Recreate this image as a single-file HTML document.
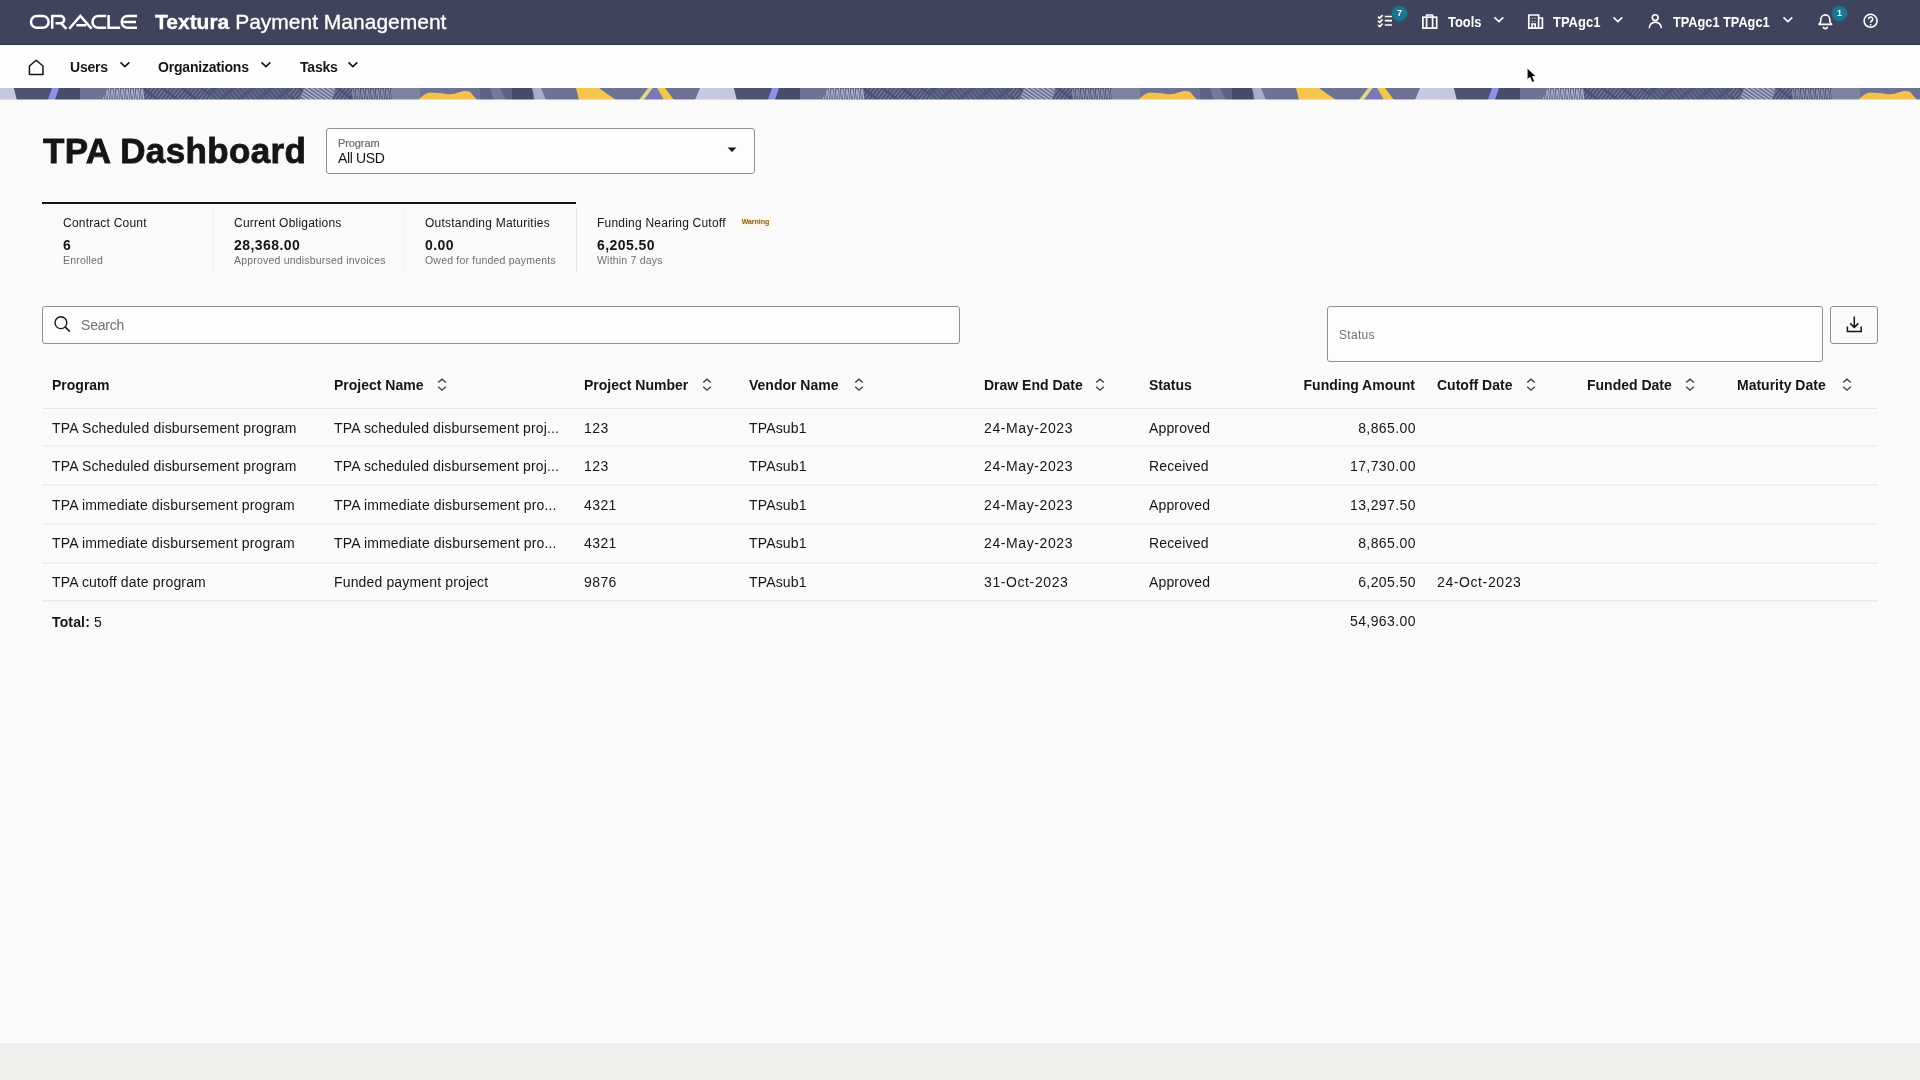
<!DOCTYPE html>
<html><head><meta charset="utf-8">
<style>
*{margin:0;padding:0;box-sizing:border-box}
html,body{width:1920px;height:1080px;overflow:hidden;background:#fafafa;-webkit-font-smoothing:antialiased;font-family:"Liberation Sans",sans-serif;color:#161513}
.a{position:absolute;white-space:nowrap}
svg.a{overflow:visible}
#hdr{position:absolute;left:0;top:0;width:1920px;height:45px;background:#3f435c;border-bottom:1px solid #2f3245}
#hdr .t{color:#fff}
#nav{position:absolute;left:0;top:45px;width:1920px;height:43px;background:#fefefe}
#banner{position:absolute;left:0;top:88px;width:1920px;height:12px;overflow:hidden}
#foot{position:absolute;left:0;top:1044px;width:1920px;height:36px;background:linear-gradient(#f0f0f0 0,#f0f0f0 8px,#f1f1ec 11px);border-top:1px solid #e8e8e8;box-shadow:0 -1px 1px #f3f3f3}
.nt{font-size:14px;font-weight:bold;color:#161513;line-height:16px;letter-spacing:-0.2px}
.ht{font-size:15px;font-weight:bold;color:#fff;line-height:16px;transform-origin:0 0}
.th{font-size:14px;font-weight:bold;color:#161513}
.td{font-size:14px;color:#161513;letter-spacing:0.15px}
.dg{letter-spacing:0.42px}
.dt{letter-spacing:0.6px}
.rb{position:absolute;left:42px;width:1836px;height:1px;background:#e9e9e8}
.kl{font-size:12px;color:#161513;line-height:14px;letter-spacing:0.22px}
.kv{font-size:14px;font-weight:bold;color:#161513;line-height:15px;letter-spacing:0.45px}
.ks{font-size:10.5px;color:#6f6f6f;line-height:12px;letter-spacing:0.2px}
.badge{position:absolute;width:15px;height:15px;border-radius:50%;background:#1d7592;box-shadow:0 0 1.5px #1d7592;color:#fff;font-size:9px;font-weight:bold;text-align:center;line-height:15px}
.sep{position:absolute;width:1px;background:#ececec}
</style></head><body><div id="root" style="position:absolute;left:0;top:0;width:1920px;height:1080px;will-change:transform">
<div id="hdr">
  <svg class="a" style="left:30px;top:15px" width="108" height="14" viewBox="0 0 108 14">
    <g fill="none" stroke="#fff" stroke-width="2.5">
      <rect x="1" y="1" width="17.6" height="11.8" rx="5.9"/>
      <path d="M22.2 13.8 V1 H30.6 A3.6 3.6 0 0 1 30.6 8.2 H25.5 L31 8.2 L36.4 13.8"/>
      <path d="M39.2 13.8 L50.4 0.9 L61.6 13.8 M46.4 10.3 H56.3"/>
      <path d="M76.2 1 H68.4 A5.9 5.9 0 0 0 68.4 12.8 H76.2"/>
      <path d="M78.6 0 V12.8 H90.2"/>
      <path d="M107 1 H97.6 A5.9 5.9 0 0 0 97.6 12.8 H107 M93.2 6.9 H106"/>
    </g>
  </svg>
  <div class="a t" style="left:155px;top:10px;font-size:21px;line-height:24px;-webkit-text-stroke:0.35px #fff"><b>Textura</b> Payment Management</div>

  <!-- checklist icon -->
  <svg class="a" style="left:1377px;top:14px" width="16" height="14" viewBox="0 0 16 14">
    <g fill="none" stroke="#fff" stroke-width="1.7">
      <path d="M1 2.6 L2.7 4.2 L5.6 1.2 M1 6.8 L2.7 8.4 L5.6 5.4 M1 11 L2.7 12.6 L5.6 9.6"/>
      <path d="M7.8 2.5 H15 M7.8 6.7 H15 M7.8 11 H15"/>
    </g>
  </svg>
  <div class="badge" style="left:1392px;top:6px">7</div>
  <!-- briefcase -->
  <svg class="a" style="left:1422px;top:13px" width="16" height="16" viewBox="0 0 16 16">
    <g fill="none" stroke="#fff" stroke-width="1.7">
      <rect x="0.9" y="4.2" width="13.8" height="10.9"/>
      <path d="M4.6 15 V2 H10.6 V15"/>
    </g>
  </svg>
  <div class="a ht" style="left:1448px;top:14.3px;transform:scaleX(0.86)">Tools</div>
  <svg class="a" style="left:1493px;top:16px" width="12" height="8" viewBox="0 0 12 8"><path d="M1.5 1.4 L5.9 5.6 L10.3 1.4" fill="none" stroke="#fff" stroke-width="1.6"/></svg>
  <!-- building -->
  <svg class="a" style="left:1528px;top:14px" width="16" height="16" viewBox="0 0 16 16">
    <g fill="none" stroke="#fff" stroke-width="1.7">
      <path d="M0.8 14.2 V1 H10.6 V14.2 Z M10.6 4 H14.4 V14.2 H10.6"/>
      <path d="M3.8 4.4 H4.6 M6.6 4.4 H7.4 M3.8 7.4 H4.6 M6.6 7.4 H7.4" stroke-width="1.4"/>
      <path d="M4 14.2 V10 H7.2 V14.2"/>
    </g>
  </svg>
  <div class="a ht" style="left:1553px;top:14.3px;transform:scaleX(0.865)">TPAgc1</div>
  <svg class="a" style="left:1612px;top:16px" width="12" height="8" viewBox="0 0 12 8"><path d="M1.5 1.4 L5.9 5.6 L10.3 1.4" fill="none" stroke="#fff" stroke-width="1.6"/></svg>
  <!-- person -->
  <svg class="a" style="left:1648px;top:13px" width="16" height="16" viewBox="0 0 16 16">
    <g fill="none" stroke="#fff" stroke-width="1.6">
      <circle cx="7.2" cy="4.6" r="2.9"/>
      <path d="M1.2 15.2 A6.1 6.1 0 0 1 13.4 15.2"/>
    </g>
  </svg>
  <div class="a ht" style="left:1673px;top:14.3px;transform:scaleX(0.85)">TPAgc1 TPAgc1</div>
  <svg class="a" style="left:1782px;top:16px" width="12" height="8" viewBox="0 0 12 8"><path d="M1.5 1.4 L5.9 5.6 L10.3 1.4" fill="none" stroke="#fff" stroke-width="1.6"/></svg>
  <!-- bell -->
  <svg class="a" style="left:1818px;top:13px" width="16" height="16" viewBox="0 0 16 16">
    <g fill="none" stroke="#fff" stroke-width="1.6" stroke-linejoin="round">
      <path d="M1 11.4 H13.6 C12.4 10.2 11.8 9 11.8 7.4 V6.4 A4.5 4.5 0 0 0 2.8 6.4 V7.4 C2.8 9 2.2 10.2 1 11.4 Z"/>
      <path d="M5.4 13.8 A1.9 1.9 0 0 0 9.2 13.8"/>
    </g>
  </svg>
  <div class="badge" style="left:1832px;top:6px">1</div>
  <!-- help -->
  <svg class="a" style="left:1862px;top:13px" width="18" height="16" viewBox="0 0 18 16">
    <g fill="none" stroke="#fff" stroke-width="1.6">
      <circle cx="8.6" cy="7.8" r="6.5"/>
      <path d="M6.5 6.2 A2.1 2.1 0 1 1 9.4 8.1 C8.7 8.5 8.6 9 8.6 9.8"/>
    </g>
    <circle cx="8.6" cy="11.8" r="0.9" fill="#fff"/>
  </svg>
</div>

<div id="nav">
  <svg class="a" style="left:28px;top:14px" width="17" height="17" viewBox="0 0 17 17">
    <path d="M1.4 15.6 V7 L8.2 1.2 L15 7 V15.6 Z" fill="none" stroke="#161513" stroke-width="1.5" stroke-linejoin="round"/>
  </svg>
  <div class="a nt" style="left:70px;top:14px">Users</div>
  <svg class="a" style="left:119px;top:16px" width="12" height="8" viewBox="0 0 12 8"><path d="M1.5 1.4 L5.9 5.6 L10.3 1.4" fill="none" stroke="#161513" stroke-width="1.6"/></svg>
  <div class="a nt" style="left:158px;top:14px">Organizations</div>
  <svg class="a" style="left:260px;top:16px" width="12" height="8" viewBox="0 0 12 8"><path d="M1.5 1.4 L5.9 5.6 L10.3 1.4" fill="none" stroke="#161513" stroke-width="1.6"/></svg>
  <div class="a nt" style="left:300px;top:14px">Tasks</div>
  <svg class="a" style="left:347px;top:16px" width="12" height="8" viewBox="0 0 12 8"><path d="M1.5 1.4 L5.9 5.6 L10.3 1.4" fill="none" stroke="#161513" stroke-width="1.6"/></svg>
</div>
<div id="banner"><svg width="1920" height="12" viewBox="0 0 1920 12" style="position:absolute;left:0;top:0"><defs><pattern id="tx" width="3.2" height="12" patternUnits="userSpaceOnUse" patternTransform="rotate(38)"><rect width="3.2" height="12" fill="#474e6f"/><path d="M1.6 0 V7 M1.6 9 V12" stroke="#8a91b0" stroke-width="0.9"/></pattern><pattern id="txb" width="3.6" height="12" patternUnits="userSpaceOnUse" patternTransform="rotate(-40)"><rect width="3.6" height="12" fill="#4d5475"/><path d="M1.8 0 V5 M1.8 8 V12" stroke="#7c84a4" stroke-width="0.9"/></pattern><pattern id="zig" width="5" height="12" patternUnits="userSpaceOnUse"><rect width="5" height="12" fill="#5f6688"/><path d="M0.5 12 L2 1 L3.5 11 L4.6 0" fill="none" stroke="#b9bed6" stroke-width="0.9"/></pattern><pattern id="zig2" width="5" height="12" patternUnits="userSpaceOnUse"><rect width="5" height="12" fill="#4f5677"/><path d="M0.5 12 L2 1 L3.5 11 L4.6 0" fill="none" stroke="#959cba" stroke-width="0.9"/></pattern><pattern id="str" width="3" height="12" patternUnits="userSpaceOnUse" patternTransform="rotate(-55)"><rect width="3" height="12" fill="#6a7192"/><path d="M1.5 0 V12" stroke="#c3c8dc" stroke-width="1"/></pattern><g id="per"><rect x="0" y="0" width="720" height="12" fill="#6e7395"/><polygon points="0,0 14,0 17,12 0,12" fill="#c4c7dd"/><polygon points="14,0 52,0 48,12 17,12" fill="#4d5373"/><polygon points="52,0 59,0 55,12 48,12" fill="#8e93ee"/><polygon points="59,0 80,0 80,12 55,12" fill="#484d6b"/><polygon points="108,0 392,0 392,12 102,12" fill="url(#tx)"/><polygon points="210,0 290,0 290,12 210,12" fill="url(#txb)"/><polygon points="108,0 144,0 144,12 102,12" fill="url(#zig)"/><polygon points="304,0 336,0 332,12 300,12" fill="url(#str)"/><polygon points="352,0 392,0 392,12 352,12" fill="url(#zig2)"/><rect x="392" y="0" width="28" height="12" fill="#7d83a1"/><path d="M418 12 C423 8 425 5 431 4.6 L442 5.2 C448 6.4 452 6.8 458 4.6 C462 2.8 466 2.4 470 3.8 L477 12 Z" fill="#f2c44e"/><rect x="480" y="0" width="32" height="12" fill="#5d6385"/><polygon points="490,0 500,0 506,12 494,12" fill="#7a809e" opacity="0.8"/><rect x="512" y="0" width="21" height="12" fill="#464b6a"/><polygon points="532,0 541,0 546,12 535,12" fill="#a8adc9"/><polygon points="576,0 599,0 616,12 579,12" fill="#f2c650"/><polygon points="648,0 653,0 644,12 639,12" fill="#d9d98e"/><polygon points="653,0 657,0 664,12 644,12" fill="#7b78b8"/><polygon points="657,0 665,0 674,12 664,12" fill="#f2c650"/><polygon points="700,0 720,0 720,12 695,12" fill="#c6c9e0"/></g></defs><use href="#per" x="0"/><use href="#per" x="720"/><use href="#per" x="1440"/><rect x="0" y="11.5" width="1920" height="0.5" fill="#fafafa"/></svg></div>

<div class="a" style="left:43px;top:131px;font-size:35px;font-weight:bold;line-height:40px;letter-spacing:0.35px;-webkit-text-stroke:0.8px #161513">TPA Dashboard</div>
<div class="a" style="left:326px;top:128px;width:429px;height:46px;border:1px solid #8f8f8f;border-radius:3px;background:#fdfdfd"></div>
<div class="a" style="left:338px;top:137px;font-size:11px;color:#6a6a6a;line-height:13px;-webkit-text-stroke:0.2px #6a6a6a;letter-spacing:-0.1px">Program</div>
<div class="a" style="left:338px;top:150px;font-size:14px;line-height:16px;letter-spacing:-0.35px">All USD</div>
<svg class="a" style="left:727px;top:147px" width="10" height="6" viewBox="0 0 10 6"><path d="M0.6 0.4 H9.4 L5 5 Z" fill="#161513"/></svg>

<div class="a" style="left:42px;top:202px;width:534px;height:2px;background:#161513"></div>
<div class="sep" style="left:213px;top:208px;height:64px;background:#f0f0f0"></div>
<div class="sep" style="left:404px;top:208px;height:64px;background:#f0f0f0"></div>
<div class="sep" style="left:576px;top:208px;height:64px;background:#e4e4e4"></div>

<div class="a kl" style="left:63px;top:216px">Contract Count</div>
<div class="a kv" style="left:63px;top:238px">6</div>
<div class="a ks" style="left:63px;top:254px">Enrolled</div>

<div class="a kl" style="left:234px;top:216px">Current Obligations</div>
<div class="a kv" style="left:234px;top:238px">28,368.00</div>
<div class="a ks" style="left:234px;top:254px">Approved undisbursed invoices</div>

<div class="a kl" style="left:425px;top:216px">Outstanding Maturities</div>
<div class="a kv" style="left:425px;top:238px">0.00</div>
<div class="a ks" style="left:425px;top:254px">Owed for funded payments</div>

<div class="a kl" style="left:597px;top:216px">Funding Nearing Cutoff</div>
<div class="a kv" style="left:597px;top:238px">6,205.50</div>
<div class="a ks" style="left:597px;top:254px">Within 7 days</div>
<div class="a" style="left:740px;top:216px;width:31px;height:12px;background:#fdf6ea;border-radius:2px;font-size:7px;font-weight:bold;color:#8a5a12;line-height:12px;text-align:center">Warning</div>

<!-- search -->
<div class="a" style="left:42px;top:306px;width:918px;height:38px;border:1px solid #8f8f8f;border-radius:3px;background:#fdfdfd"></div>
<svg class="a" style="left:52px;top:314px" width="20" height="20" viewBox="0 0 20 20">
  <circle cx="8.9" cy="8.7" r="5.9" fill="none" stroke="#161513" stroke-width="1.4"/>
  <path d="M13.1 12.9 L17.8 17.6" stroke="#161513" stroke-width="1.5"/>
</svg>
<div class="a" style="left:81px;top:316.5px;font-size:14px;color:#6f6f6f;line-height:16px;letter-spacing:-0.2px">Search</div>

<!-- status -->
<div class="a" style="left:1327px;top:306px;width:496px;height:56px;border:1px solid #8f8f8f;border-radius:3px;background:#fdfdfd"></div>
<div class="a" style="left:1339px;top:328px;font-size:12px;color:#6f6f6f;line-height:14px;letter-spacing:0.3px">Status</div>
<!-- download -->
<div class="a" style="left:1830px;top:306px;width:48px;height:38px;border:1px solid #8f8f8f;border-radius:3px;background:#fafafa"></div>
<svg class="a" style="left:1845px;top:315px" width="18" height="19" viewBox="0 0 18 19">
  <path d="M9.3 1.6 V12.2 M5.2 8.4 L9.3 12.4 L13.4 8.4" fill="none" stroke="#161513" stroke-width="1.5"/>
  <path d="M2.4 11.6 V16.6 H16.2 V11.6" fill="none" stroke="#161513" stroke-width="1.5"/>
</svg>
<div class="a th" style="left:52px;top:377px;line-height:16px">Program</div>
<div class="a th" style="left:334px;top:377px;line-height:16px">Project Name</div>
<svg class="a" style="left:437px;top:378px" width="10" height="14" viewBox="0 0 10 14"><path d="M1.2 4.6 L5 1.2 L8.8 4.6 M1.2 8.8 L5 12.2 L8.8 8.8" fill="none" stroke="#3a3a3a" stroke-width="1.3"/></svg>
<div class="a th" style="left:584px;top:377px;line-height:16px">Project Number</div>
<svg class="a" style="left:702px;top:378px" width="10" height="14" viewBox="0 0 10 14"><path d="M1.2 4.6 L5 1.2 L8.8 4.6 M1.2 8.8 L5 12.2 L8.8 8.8" fill="none" stroke="#3a3a3a" stroke-width="1.3"/></svg>
<div class="a th" style="left:749px;top:377px;line-height:16px">Vendor Name</div>
<svg class="a" style="left:854px;top:378px" width="10" height="14" viewBox="0 0 10 14"><path d="M1.2 4.6 L5 1.2 L8.8 4.6 M1.2 8.8 L5 12.2 L8.8 8.8" fill="none" stroke="#3a3a3a" stroke-width="1.3"/></svg>
<div class="a th" style="left:984px;top:377px;line-height:16px">Draw End Date</div>
<svg class="a" style="left:1095px;top:378px" width="10" height="14" viewBox="0 0 10 14"><path d="M1.2 4.6 L5 1.2 L8.8 4.6 M1.2 8.8 L5 12.2 L8.8 8.8" fill="none" stroke="#3a3a3a" stroke-width="1.3"/></svg>
<div class="a th" style="left:1149px;top:377px;line-height:16px">Status</div>
<div class="a th" style="right:505px;top:377px;line-height:16px">Funding Amount</div>
<div class="a th" style="left:1437px;top:377px;line-height:16px">Cutoff Date</div>
<svg class="a" style="left:1526px;top:378px" width="10" height="14" viewBox="0 0 10 14"><path d="M1.2 4.6 L5 1.2 L8.8 4.6 M1.2 8.8 L5 12.2 L8.8 8.8" fill="none" stroke="#3a3a3a" stroke-width="1.3"/></svg>
<div class="a th" style="left:1587px;top:377px;line-height:16px">Funded Date</div>
<svg class="a" style="left:1685px;top:378px" width="10" height="14" viewBox="0 0 10 14"><path d="M1.2 4.6 L5 1.2 L8.8 4.6 M1.2 8.8 L5 12.2 L8.8 8.8" fill="none" stroke="#3a3a3a" stroke-width="1.3"/></svg>
<div class="a th" style="left:1737px;top:377px;line-height:16px">Maturity Date</div>
<svg class="a" style="left:1842px;top:378px" width="10" height="14" viewBox="0 0 10 14"><path d="M1.2 4.6 L5 1.2 L8.8 4.6 M1.2 8.8 L5 12.2 L8.8 8.8" fill="none" stroke="#3a3a3a" stroke-width="1.3"/></svg>
<div class="rb" style="top:408px;height:1px;background:#e6e6e6"></div>
<div class="rb" style="top:413px;height:1px;background:#f4f4f4"></div>
<div class="rb" style="top:445px;height:2px;background:#f0f0f0"></div>
<div class="rb" style="top:484px;height:2px;background:#efefef"></div>
<div class="rb" style="top:523px;height:2px;background:#f1f1f1"></div>
<div class="rb" style="top:562px;height:2px;background:#efefef"></div>
<div class="rb" style="top:600px;height:1px;background:#e6e6e6"></div>
<div class="rb" style="top:601px;height:1px;background:#f0f0f0"></div>
<div class="a td" style="left:52px;top:420px;line-height:16px">TPA Scheduled disbursement program</div>
<div class="a td" style="left:334px;top:420px;line-height:16px">TPA scheduled disbursement proj...</div>
<div class="a td" style="left:584px;top:420px;line-height:16px"><span class="dg">123</span></div>
<div class="a td" style="left:749px;top:420px;line-height:16px">TPAsub<span class="dg">1</span></div>
<div class="a td" style="left:984px;top:420px;line-height:16px"><span class="dt">24-May-2023</span></div>
<div class="a td" style="left:1149px;top:420px;line-height:16px">Approved</div>
<div class="a td" style="right:504px;top:420px;line-height:16px"><span class="dg">8,865.00</span></div>
<div class="a td" style="left:52px;top:458px;line-height:16px">TPA Scheduled disbursement program</div>
<div class="a td" style="left:334px;top:458px;line-height:16px">TPA scheduled disbursement proj...</div>
<div class="a td" style="left:584px;top:458px;line-height:16px"><span class="dg">123</span></div>
<div class="a td" style="left:749px;top:458px;line-height:16px">TPAsub<span class="dg">1</span></div>
<div class="a td" style="left:984px;top:458px;line-height:16px"><span class="dt">24-May-2023</span></div>
<div class="a td" style="left:1149px;top:458px;line-height:16px">Received</div>
<div class="a td" style="right:504px;top:458px;line-height:16px"><span class="dg">17,730.00</span></div>
<div class="a td" style="left:52px;top:497px;line-height:16px">TPA immediate disbursement program</div>
<div class="a td" style="left:334px;top:497px;line-height:16px">TPA immediate disbursement pro...</div>
<div class="a td" style="left:584px;top:497px;line-height:16px"><span class="dg">4321</span></div>
<div class="a td" style="left:749px;top:497px;line-height:16px">TPAsub<span class="dg">1</span></div>
<div class="a td" style="left:984px;top:497px;line-height:16px"><span class="dt">24-May-2023</span></div>
<div class="a td" style="left:1149px;top:497px;line-height:16px">Approved</div>
<div class="a td" style="right:504px;top:497px;line-height:16px"><span class="dg">13,297.50</span></div>
<div class="a td" style="left:52px;top:535px;line-height:16px">TPA immediate disbursement program</div>
<div class="a td" style="left:334px;top:535px;line-height:16px">TPA immediate disbursement pro...</div>
<div class="a td" style="left:584px;top:535px;line-height:16px"><span class="dg">4321</span></div>
<div class="a td" style="left:749px;top:535px;line-height:16px">TPAsub<span class="dg">1</span></div>
<div class="a td" style="left:984px;top:535px;line-height:16px"><span class="dt">24-May-2023</span></div>
<div class="a td" style="left:1149px;top:535px;line-height:16px">Received</div>
<div class="a td" style="right:504px;top:535px;line-height:16px"><span class="dg">8,865.00</span></div>
<div class="a td" style="left:52px;top:574px;line-height:16px">TPA cutoff date program</div>
<div class="a td" style="left:334px;top:574px;line-height:16px">Funded payment project</div>
<div class="a td" style="left:584px;top:574px;line-height:16px"><span class="dg">9876</span></div>
<div class="a td" style="left:749px;top:574px;line-height:16px">TPAsub<span class="dg">1</span></div>
<div class="a td" style="left:984px;top:574px;line-height:16px"><span class="dt">31-Oct-2023</span></div>
<div class="a td" style="left:1149px;top:574px;line-height:16px">Approved</div>
<div class="a td" style="right:504px;top:574px;line-height:16px"><span class="dg">6,205.50</span></div>
<div class="a td" style="left:1437px;top:574px;line-height:16px"><span class="dt">24-Oct-2023</span></div>
<div class="a td" style="left:52px;top:613.5px;line-height:16px"><b>Total:</b> <span class="dg">5</span></div>
<div class="a td" style="right:504px;top:613px;line-height:16px"><span class="dg">54,963.00</span></div>
<div id="foot"></div>
<svg class="a" style="left:1526px;top:67px" width="12" height="16" viewBox="0 0 11 15">
  <path d="M1 1 V11.8 L3.6 9.6 L5.6 14.4 L7.9 13.5 L5.9 8.9 L9.2 8.7 Z" fill="#000" stroke="#fff" stroke-width="0.7"/>
</svg>
</div></body></html>
